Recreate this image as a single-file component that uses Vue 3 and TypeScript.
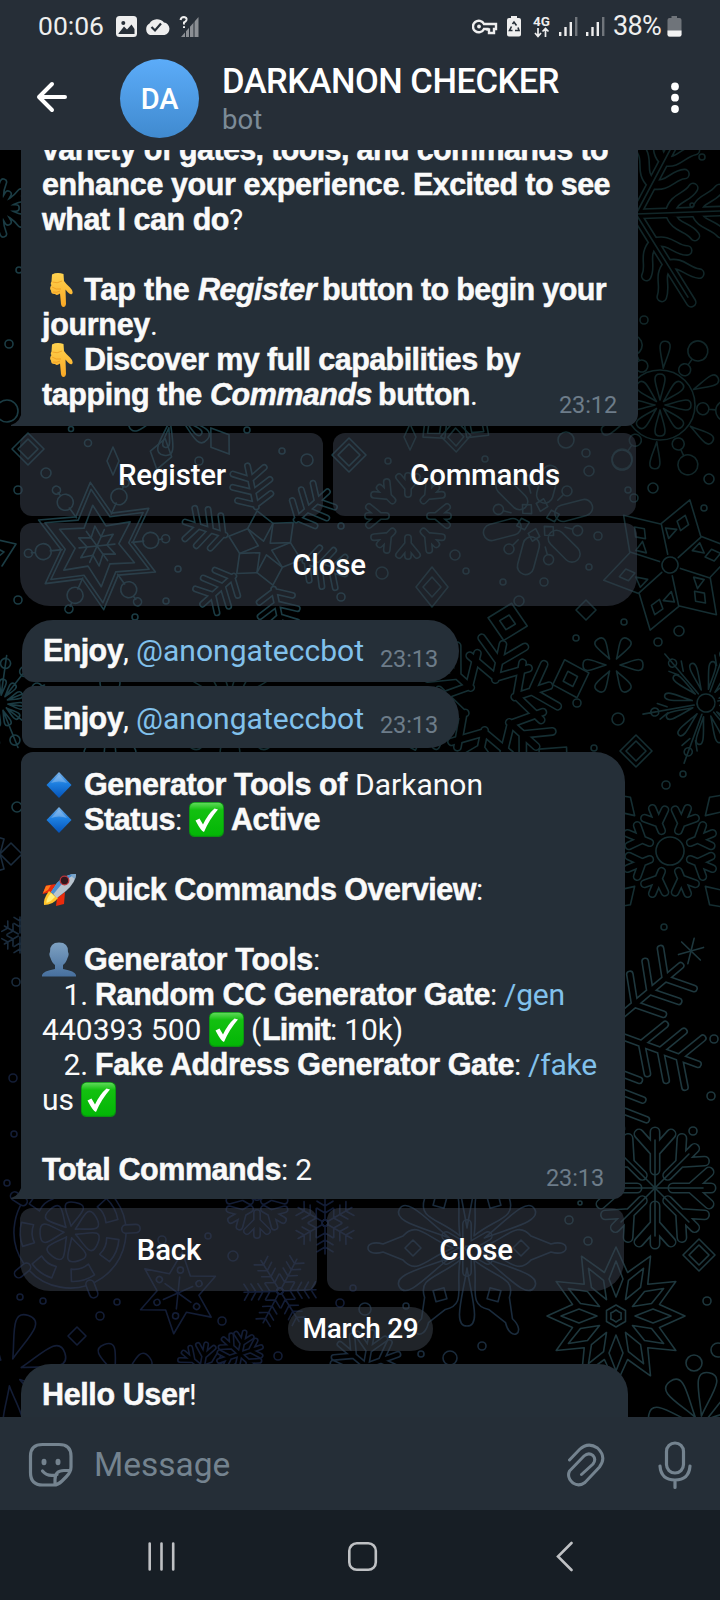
<script setup lang="ts">
import type { Directive } from 'vue'

interface Run { t?: string; k?: 'b' | 'i' | 'l' | 'e'; w?: number; g?: number; e?: string }
interface Motif { x: number; y: number; n: number; r?: number; c: string; tube?: string; tw?: number; line?: string; whole?: string }

// Spreads a run over its column width by adjusting the tracking.
const vFit: Directive<HTMLElement, Run | undefined> = {
  mounted(el, { value }) {
    if (!value) return
    if (value.w) {
      const n = (el.textContent ?? '').length
      const natural = el.getBoundingClientRect().width
      el.style.letterSpacing = `${(value.w - natural) / n}px`
    }
    if (value.g) el.style.marginRight = `${value.g}px`
  },
}

const b = (t: string, w?: number, g?: number): Run => ({ t, k: 'b', w, g })
const i = (t: string, w?: number, g?: number): Run => ({ t, k: 'i', w, g })
const r = (t: string, w?: number): Run => ({ t, w })
const l = (t: string, w?: number): Run => ({ t, k: 'l', w })
const e = (name: string, g = 8): Run => ({ k: 'e', e: name, g })

const intro: Run[][] = [
  [b('variety of gates, tools, and commands to', 566)],
  [b('enhance your experience', 357), r('. ', 14), b('Excited to see', 197)],
  [b('what I can do', 187), r('?')],
  [],
  [e('hand'), b('Tap the ', 114), i('Register', 118, 6), b('button to begin your', 284)],
  [b('journey', 108), r('.')],
  [e('hand'), b('Discover my full capabilities by', 436)],
  [b('tapping the ', 168), i('Commands', 162, 6), b('button', 92), r('.')],
]
const tools: Run[][] = [
  [e('gem'), b('Generator Tools of ', 271), r('Darkanon', 128)],
  [e('gem'), b('Status', 91), r(': ', 14), e('check', 7), b('Active', 89)],
  [],
  [e('rocket'), b('Quick Commands Overview', 392), r(':')],
  [],
  [e('bust'), b('Generator Tools', 229), r(':')],
  [r('   1. ', 53), b('Random CC Generator Gate', 395), r(': ', 14), l('/gen', 61)],
  [r('440393 500 ', 167), e('check', 7), r('(', 11), b('Limit', 68), r(': 10k)', 73)],
  [r('   2. ', 53), b('Fake Address Generator Gate', 419), r(': ', 14), l('/fake', 69)],
  [r('us ', 39), e('check', 7)],
  [],
  [b('Total Commands', 239), r(': 2', 31)],
]
const enjoy: Run[] = [b('Enjoy', 80), r(', ', 13), l('@anongateccbot', 228)]
const hello: Run[] = [b('Hello User', 147), r('!')]

const T1 = '#1b3c44', T2 = '#152e32', T3 = '#112628', N1 = '#131d36', N2 = '#1a2b3c', G1 = '#1e373d'

const petal = (a: number, z: number, w: number) =>
  `M0 ${-a}C${w * .5} ${-(a + z) / 2} ${w * 1.6} ${-z} 0 ${-z}S${-w * .5} ${-(a + z) / 2} 0 ${-a}`
const rhomb = (a: number, z: number, w: number) => `M0 ${-a}L${w} ${-(a + z) / 2}L0 ${-z}L${-w} ${-(a + z) / 2}Z`
const ball = (y: number, q: number) => `M${-q} ${-y}a${q} ${q} 0 1 0 ${2 * q} 0a${q} ${q} 0 1 0 ${-2 * q} 0`
const star = (n: number, R: number, q: number) =>
  'M' + Array.from({ length: n * 2 }, (_, k) => {
    const a = (k * Math.PI) / n, m = k % 2 ? q : R
    return `${(m * Math.sin(a)).toFixed(1)} ${(-m * Math.cos(a)).toFixed(1)}`
  }).join('L') + 'Z'
const fir = (R: number, from: number, step: number, len: number) => {
  let d = `M0 ${-from}V${-R}`
  for (let y = from + step; y < R - 3; y += step) d += `M${-len} ${-(y + len * .6)}L0 ${-y}L${len} ${-(y + len * .6)}`
  return d
}

const motifs: Motif[] = [
  { x: 97, y: 546, n: 6, r: 24, c: T1, whole: '', line: 'M0 -35V-47' + ball(54, 8) + 'M0 -62V-66' + ball(69, 4) + 'M0 0V-18' },
  { x: 97, y: 546, n: 1, r: -6, c: T1, whole: star(6, 64, 36) + star(6, 57, 32) + star(6, 41, 22) + star(6, 20, 10) },
  { x: 265, y: 548, n: 6, r: -12, c: T1, tube: 'M0 -42V-84M-17 -52L0 -44L17 -52M-19 -66L0 -57L19 -66M-16 -79L0 -70L16 -79', tw: 7, line: rhomb(7, 38, 13) },
  { x: 408, y: 516, n: 8, r: 0, c: T2, tube: 'M0 -22V-40M-9 -39L0 -28L9 -39', tw: 8 },
  { x: 538, y: 520, n: 6, r: 15, c: T2, tube: 'M0 -26V-48', tw: 18, line: rhomb(9, 22, 6) },
  { x: 538, y: 520, n: 6, r: 45, c: T2, line: 'M0 -28V-36' + ball(41, 5) },
  { x: 670, y: 565, n: 1, r: 17, c: T2, whole: star(6, 68, 42) + ball(0, 8) },
  { x: 670, y: 565, n: 6, r: 17, c: T2, line: rhomb(36, 52, 6) + 'M-9 -25L-15 -34L-4 -36Z' },
  { x: 670, y: 565, n: 6, r: -12, c: T2, line: 'M0 -11V-42' },
  { x: 613, y: 665, n: 6, r: 30, c: T2, line: petal(7, 30, 6.5) },
  { x: 706, y: 703, n: 12, r: 10, c: T2, line: petal(14, 42, 4) },
  { x: 706, y: 703, n: 6, r: 20, c: T2, line: 'M0 -12V-64M-8 -48l5 9M8 -48l-5 9' + ball(52, 4), whole: ball(0, 9) },
  { x: 660, y: 405, n: 8, r: 0, c: T3, line: petal(5, 31, 6), whole: ball(0, 35) },
  { x: 660, y: 405, n: 6, r: 5, c: T3, line: petal(37, 64, 6) },
  { x: 660, y: 405, n: 6, r: 35, c: T3, line: ball(43, 6) + ball(66, 10) + 'M0 -49V-56' },
  { x: 636, y: 214, n: 6, r: 28, c: T3, tube: 'M0 0V-104M0 -34C-16 -38 -14 -52 -24 -58M0 -34C16 -38 14 -52 24 -58M0 -60C-14 -64 -12 -76 -22 -84M0 -60C14 -64 12 -76 22 -84', tw: 11, line: 'M0 0V-98' },
  { x: 490, y: 705, n: 6, r: 12, c: T2, tube: 'M0 -26V-62M-22 -64L0 -44L22 -64M-30 -44L0 -28L30 -44', tw: 9, line: rhomb(66, 104, 20) + rhomb(77, 92, 8) },
  { x: 670, y: 851, n: 8, r: 22.5, c: T2, tube: 'M0 -22V-46M-11 -40L0 -30L11 -40', tw: 9, whole: ball(0, 14) },
  { x: 670, y: 851, n: 4, r: 45, c: T2, line: 'M0 -50L10 -66L0 -80L-10 -66Z' },
  { x: 604, y: 1030, n: 6, r: 50, c: G1, tube: fir(100, 20, 20, 26), tw: 8 },
  { x: 655, y: 1188, n: 8, r: 0, c: G1, tube: 'M0 -18V-56M-16 -54L0 -36L16 -54', tw: 11, line: 'M0 0V-48' },
  { x: 616, y: 1316, n: 1, r: 0, c: G1, whole: star(12, 69, 45) + star(6, 11, 9.5) + star(6, 6, 5) },
  { x: 616, y: 1316, n: 12, r: 0, c: G1, line: rhomb(19, 55, 7) },
  { x: 467, y: 1248, n: 6, r: 30, c: N2, line: 'M0 -14C-10 -40 -28 -50 -12 -64L-4 -84C-10 -104 10 -104 4 -84L12 -64C28 -50 10 -40 0 -14' + rhomb(46, 62, 8) },
  { x: 467, y: 1248, n: 6, r: 0, c: N2, tube: 'M0 -6V-24', tw: 10, line: petal(20, 78, 9) },
  { x: 70, y: 1232, n: 7, r: 10, c: N1, line: petal(6, 30, 11) + 'M-9 -36L-12 -48Q0 -52 12 -48L9 -36Q0 -40 -9 -36', whole: ball(0, 56) },
  { x: 70, y: 1232, n: 5, r: 15, c: N1, tube: 'M0 -56V-66', tw: 10 },
  { x: 178, y: 1293, n: 1, r: 6, c: N1, whole: star(6, 41, 21) },
  { x: 178, y: 1293, n: 6, r: 6, c: N1, line: 'M0 0V-16' + ball(23, 3) },
  { x: 280, y: 1291, n: 6, r: 28, c: N1, line: fir(36, 3, 7, 8) + ball(0, 3) },
  { x: 325, y: 1223, n: 6, r: 0, c: N1, line: fir(31, 3, 7, 8) + ball(0, 3) },
  { x: 8, y: 1372, n: 7, r: 20, c: N1, line: petal(14, 60, 12) },
  { x: 118, y: 1382, n: 5, r: -20, c: N1, line: petal(8, 40, 10) },
  { x: 202, y: 1368, n: 6, r: 10, c: N1, tube: 'M0 0V-24M-8 -22L0 -12L8 -22', tw: 6 },
  { x: 240, y: 1354, n: 6, r: 12, c: N1, tube: 'M0 0V-22M-8 -19L0 -11L8 -19', tw: 6 },
  { x: 257, y: 1205, n: 6, r: 0, c: N1, tube: 'M0 -8V-30M-10 -26L0 -16L10 -26', tw: 8 },
  { x: 366, y: 1366, n: 6, r: 10, c: N2, tube: 'M0 0V-34M-14 -30L0 -16L14 -30', tw: 7 },
  { x: 700, y: 1424, n: 8, r: 10, c: G1, line: petal(8, 52, 11) },
  { x: 0, y: 703, n: 12, r: 8, c: T1, line: petal(8, 24, 4) + 'M0 -8V-48' + ball(40, 5) },
  { x: 0, y: 208, n: 6, r: 90, c: T1, tube: 'M0 0V-16M-10 -24Q-8 -10 0 -4Q8 -10 10 -24', tw: 8 },
  { x: 172, y: 410, n: 6, r: 10, c: T1, line: petal(10, 46, 9) + petal(18, 38, 4) },
  { x: 455, y: 410, n: 7, r: 24, c: T2, line: rhomb(10, 42, 15) + rhomb(18, 36, 8) },
  { x: 0, y: 854, n: 3, r: 90, c: N2, line: rhomb(0, 22, 11) },
  { x: 20, y: 935, n: 6, r: 0, c: N2, line: fir(18, 2, 6, 6) },
  { x: 230, y: 705, n: 8, r: 0, c: T2, line: petal(10, 58, 12) },
  { x: 110, y: 720, n: 7, r: 0, c: T1, line: petal(10, 44, 12) },
  { x: 691, y: 951, n: 6, r: 14, c: G1, line: 'M0 0V-13' },
  { x: 0, y: 552, n: 1, r: 0, c: T1, whole: 'M-10 -14L16 -8L2 14M-4 -4L4 0L-2 5' },
  { x: 28, y: 449, n: 1, c: T1, whole: rhomb(-16, 16, 16) + rhomb(-10, 10, 10) },
  { x: 432, y: 587, n: 1, c: T2, whole: rhomb(-20, 20, 16) + rhomb(-10, 10, 9) },
  { x: 699, y: 1255, n: 1, c: G1, whole: rhomb(-16, 16, 16) + rhomb(-10, 10, 10) },
  { x: 636, y: 751, n: 1, c: T2, whole: rhomb(-16, 16, 16) + rhomb(-10, 10, 10) },
  { x: 161, y: 454, n: 1, r: 15, c: T1, whole: rhomb(-16, 16, 11) },
  { x: 220, y: 441, n: 1, r: -35, c: T1, whole: rhomb(-16, 16, 11) },
  { x: 113, y: 461, n: 1, c: T1, whole: rhomb(-14, 14, 6) },
  { x: 349, y: 455, n: 1, c: T1, whole: rhomb(-17, 17, 17) + rhomb(-11, 11, 11) },
  { x: 586, y: 610, n: 1, c: T2, whole: rhomb(-10, 10, 10) },
  { x: 77, y: 1336, n: 1, c: N1, whole: rhomb(-9, 9, 9) },
  { x: 410, y: 437, n: 1, c: T2, whole: rhomb(-13, 13, 6) },
]

const dots: [number, number, number, string][] = [
  [71, 429, 2.5, T1], [88, 443, 3.5, T1], [46, 473, 5, T1], [18, 490, 4, T1], [18, 600, 4, T1], [135, 617, 3, T1], [19, 270, 3, T1], [9, 344, 4, T1], [7, 411, 11, T1],
  [247, 430, 3, T1], [282, 451, 3, T1], [307, 460, 6, T1], [199, 461, 4, T1], [178, 569, 3, T1], [166, 601, 3, T1], [341, 526, 3, T1], [341, 597, 4, T1], [388, 461, 3, T2],
  [485, 459, 3, T2], [566, 440, 8, T2], [586, 453, 4, T2], [589, 471, 5, T2], [622, 460, 10, T2], [628, 490, 3, T2], [634, 498, 4, T2], [598, 536, 4, T2], [589, 567, 3, T2],
  [544, 582, 4, T2], [503, 582, 3, T2], [466, 571, 3, T2], [455, 555, 5, T2], [382, 573, 6, T2], [519, 601, 5, T2], [624, 622, 3, T2], [576, 638, 3, T2], [577, 703, 4, T2],
  [618, 719, 6, T2], [653, 488, 5, T2], [709, 479, 5, T2], [704, 508, 3, T2], [679, 631, 5, T2], [658, 642, 4, T2], [594, 748, 3, T2], [683, 774, 3, T2], [666, 785, 4, T2],
  [664, 927, 3, T2], [714, 1039, 4, G1], [711, 1096, 4, G1], [693, 1131, 4, G1], [644, 320, 4, T3], [702, 157, 3, T3], [17, 807, 5, T1], [16, 982, 4, N2], [13, 1078, 4, N1],
  [14, 1134, 3, N1], [7, 1183, 3, N1], [20, 1297, 3, N1], [43, 1301, 3, N1], [117, 1302, 3, N1], [100, 1316, 4, N1], [222, 1321, 4, N1], [278, 1356, 4, N1], [233, 1256, 5, N1],
  [208, 1236, 3, N1], [162, 1240, 4, N1], [340, 1303, 4, N1], [353, 1288, 3, N1], [365, 1309, 6, N2], [406, 1306, 3, N2], [482, 1346, 4, N2], [421, 1354, 3, N2], [569, 1220, 4, G1],
  [588, 1241, 4, G1], [580, 1203, 2, G1], [707, 1301, 4, G1], [694, 1363, 8, G1], [718, 1350, 7, G1], [450, 1358, 7, N2], [692, 205, 2, T3],
]
const turns = (m: Motif) => Array.from({ length: m.n }, (_, k) => (m.r ?? 0) + (k * 360) / m.n)
</script>

<template>
  <div class="phone">
    <svg width="0" height="0" class="defs">
      <defs>
        <linearGradient id="gy" x1="0" y1="0" x2="0" y2="1"><stop offset="0" stop-color="#ffd34f" /><stop offset="1" stop-color="#f9a825" /></linearGradient>
        <linearGradient id="gb" x1="0" y1="0" x2="0" y2="1"><stop offset="0" stop-color="#7fb4e6" /><stop offset=".45" stop-color="#1d7fe0" /><stop offset="1" stop-color="#0553b8" /></linearGradient>
        <linearGradient id="gg" x1="0" y1="0" x2="0" y2="1"><stop offset="0" stop-color="#5fd95a" /><stop offset=".22" stop-color="#13c010" /><stop offset="1" stop-color="#03b606" /></linearGradient>
        <linearGradient id="gp" x1="0" y1="0" x2="0" y2="1"><stop offset="0" stop-color="#7ea1c2" /><stop offset="1" stop-color="#47709e" /></linearGradient>
        <symbol id="hand" viewBox="0 0 34 35"><path fill="url(#gy)" d="M10 2.5Q15-.2 21.500 2L22 9Q24 12 28 15.500Q32 19.500 30 22Q28 23.500 23.500 17.500L24 32Q23.500 35 21.500 35Q19.500 35 19 32L18 21.500Q15 24 13 22Q9 22.500 9 18.500Q7 16 9.500 13Q8 12 9.500 9.500Z" /><path d="M10 15Q14 18 19 17M11 20Q15 21 18 19M10.500 10Q15 12 20 9" fill="none" stroke="#e88b14" stroke-width=".8" opacity=".7" /></symbol>
        <symbol id="gem" viewBox="0 0 34 35"><path fill="url(#gb)" d="M17 5L29.500 18L17 31L4.500 18Z" /><path fill="#b9d8f5" opacity=".35" d="M17 7.500L25 16Q17 13 9 16Z" /></symbol>
        <symbol id="check" viewBox="0 0 35 35"><rect width="35" height="35" rx="5.500" fill="#0a8f12" /><rect x=".8" y=".8" width="33.400" height="33" rx="5" fill="url(#gg)" /><path d="M6.500 18.500L10.500 16.500L14 22.500Q19 12 25.500 6.500L29 7.500Q20.500 17 15 30Q12.500 30 6.500 18.500Z" fill="#fff" /></symbol>
        <symbol id="rocket" viewBox="0 0 34 35"><path fill="#ea2b0c" d="M14 12L4 13.500L.500 22L9 20ZM23 20L22 32L14 34L15 26Z" /><path fill="#ff7a1a" d="M4 14L9 13L6 18L1 21Z" /><path fill="#ffc42b" d="M7 19Q1 27 2 33Q11 33 16 26Z" /><path fill="#ffef7a" d="M9 21Q4 27 4.500 31Q10 29 13 25Z" /><path fill="#b8c4cf" d="M34 2Q34 10 24 19L15 26L9 20L15 11Q23 2 34 2Z" /><path fill="#4b8fd0" d="M34 2Q23 2 15 11L9 20L11.500 22L19 13Q25 6 34 2Z" /><path fill="#7aa6cc" d="M34 2L33 7Q30 6 29 2.500Z" /><circle cx="22.500" cy="8.500" r="4.300" fill="#32161d" stroke="#b8333a" stroke-width="1.300" /></symbol>
        <symbol id="bust" viewBox="0 0 34 35"><path fill="url(#gp)" d="M17 .500Q26.500 .500 26 10Q27.500 12 25.500 16Q24 21 21 23V27Q33 29 34 33V34.500H0V33Q1 29 13 27V23Q10 21 8.500 16Q6.500 12 8 10Q7.500 .500 17 .500Z" /></symbol>
      </defs>
    </svg>

    <header class="top">
      <div class="status">
        <span class="clock">00:06</span>
        <svg class="st-left" width="84" height="22" viewBox="0 0 84 22">
          <rect x="0" y="0" width="21" height="21" rx="3.500" fill="#eee" /><circle cx="7.300" cy="7" r="2" fill="#262e37" /><path d="M2.500 17.500L8 10.500L11 13.500L15.500 8.500L18.500 13V18H2.500Z" fill="#262e37" />
          <path d="M34 19A6 6.300 0 0 1 33.500 7.500A8.500 8 0 0 1 48 6.500A5.900 6.300 0 0 1 48.500 19Z" fill="#eee" /><path d="M35.500 11L39 14.500L45 7.500" fill="none" stroke="#262e37" stroke-width="2.200" />
          <path d="M65 21L82.500 1V21Z" fill="#8b8f94" /><path d="M69.500 12V21M73.500 9V21M78 4V21" stroke="#262e37" stroke-width="1" /><path d="M64.500 4Q65 1 68 1Q71 1.500 70.500 4Q70 5.500 68 6.500V8.500M68 10.300V12" fill="none" stroke="#eee" stroke-width="2" />
        </svg>
        <svg class="st-right" width="136" height="23" viewBox="0 0 136 23">
          <g fill="none" stroke="#eee" stroke-width="2.400"><path d="M12 8A5.800 5.800 0 1 0 12 13H15.500V13.500H17V17H22V13H24V8Z" /></g><circle cx="7" cy="10.500" r="1.900" fill="#eee" />
          <path d="M39 0H45V2H47Q49 2 49 4V18.500Q49 20.500 47 20.500H37Q35 20.500 35 18.500V4Q35 2 37 2H39Z" fill="#eee" /><path d="M40.500 8L42 6L44.500 9.500M46 11.500L47 14.500H43M40.500 14.500H37.500L39.500 10.500" fill="none" stroke="#262e37" stroke-width="1.600" />
          <path d="M66 12V20M63 17L66 20.500L69 17M73.500 21V13M70.500 15.500L73.500 12.500L76.500 15.500" fill="none" stroke="#eee" stroke-width="1.700" />
          <g v-for="o in [0, 27]" :key="o" fill="#eee"><rect :x="87 + o" y="16" width="2.400" height="4" /><rect :x="92.300 + o" y="11" width="2.400" height="9" /><rect :x="97.600 + o" y="6" width="2.400" height="14" /><rect :x="103 + o" y="1" width="2.400" height="19" fill="#70757b" /></g>
        </svg>
        <span class="lte">4G</span>
        <span class="pct">38%</span>
        <svg class="batt" width="15" height="22" viewBox="0 0 15 22"><path d="M4.500 0H10V2H12.500Q14.500 2 14.500 4V19Q14.500 21 12.500 21H2.500Q.500 21 .500 19V4Q.500 2 2.500 2H4.500Z" fill="#6f747a" /><path d="M.500 14.500H14.500V18.500Q14.500 20.500 12.500 20.500H2.500Q.500 20.500 .500 18.500Z" fill="#f2f2f2" /></svg>
      </div>
      <div class="bar">
        <svg class="back" width="32" height="32" viewBox="0 0 32 32" fill="none" stroke="#fff" stroke-width="4" stroke-linecap="round" stroke-linejoin="round"><path d="M29 16H3M16 3L3 16L16 29" /></svg>
        <div class="avatar">DA</div>
        <div class="who"><div class="title"><span v-fit="{ w: 337 }">DARKANON CHECKER</span></div><div class="sub">bot</div></div>
        <svg class="more" width="10" height="32" viewBox="0 0 10 32" fill="#fff"><circle v-for="y in [4.500, 15.700, 27]" :key="y" cx="5" :cy="y" r="3.900" /></svg>
      </div>
    </header>

    <main class="chat">
      <svg class="paper" width="720" height="1267" viewBox="0 150 720 1267" fill="none" stroke-width="1.600" stroke-linecap="round" stroke-linejoin="round">
        <g v-for="(m, k) in motifs" :key="k" :transform="`translate(${m.x} ${m.y})`" :stroke="m.c">
          <template v-if="m.tube">
            <path v-for="a in turns(m)" :key="'a' + a" :d="m.tube" :transform="`rotate(${a})`" :stroke-width="m.tw" />
            <path v-for="a in turns(m)" :key="'b' + a" :d="m.tube" :transform="`rotate(${a})`" :stroke-width="(m.tw ?? 6) - 3.2" stroke="#000" />
          </template>
          <template v-if="m.line"><path v-for="a in turns(m)" :key="'c' + a" :d="m.line" :transform="`rotate(${a})`" /></template>
          <path v-if="m.whole" :d="m.whole" :transform="`rotate(${m.r ?? 0})`" />
        </g>
        <circle v-for="(d, k) in dots" :key="'d' + k" :cx="d[0]" :cy="d[1]" :r="d[2]" :stroke="d[3]" />
      </svg>

      <div class="flow">
        <section class="bubble intro">
          <div v-for="(line, n) in intro" :key="n" class="line">
            <template v-for="(run, k) in line" :key="k">
              <svg v-if="run.k === 'e'" v-fit="run" class="emoji" :class="run.e"><use :href="'#' + run.e" /></svg>
              <span v-else v-fit="run" :class="run.k">{{ run.t }}</span>
            </template>
          </div>
          <time>23:12</time>
          <svg class="tail" width="11" height="16" viewBox="0 0 11 16"><path d="M11 0Q10 12 0 15V16H11Z" fill="#252f38" /></svg>
        </section>
        <div class="keys k1"><button>Register</button><button>Commands</button></div>
        <div class="keys k2"><button>Close</button></div>

        <section v-for="q in 2" :key="q" class="bubble short" :class="'s' + q">
          <div class="line"><span v-for="(run, k) in enjoy" :key="k" v-fit="run" :class="run.k">{{ run.t }}</span></div>
          <time>23:13</time>
        </section>

        <section class="bubble tools">
          <div v-for="(line, n) in tools" :key="n" class="line">
            <template v-for="(run, k) in line" :key="k">
              <svg v-if="run.k === 'e'" v-fit="run" class="emoji" :class="run.e"><use :href="'#' + run.e" /></svg>
              <span v-else v-fit="run" :class="run.k">{{ run.t }}</span>
            </template>
          </div>
          <time>23:13</time>
          <svg class="tail" width="11" height="16" viewBox="0 0 11 16"><path d="M11 0Q10 12 0 15V16H11Z" fill="#252f38" /></svg>
        </section>
        <div class="keys k3"><button>Back</button><button>Close</button></div>
        <div class="date">March 29</div>
        <section class="bubble hello">
          <div class="line"><span v-for="(run, k) in hello" :key="k" v-fit="run" :class="run.k">{{ run.t }}</span></div>
        </section>
      </div>
    </main>

    <footer class="composer">
      <svg class="smile" width="46" height="46" viewBox="0 0 46 46" fill="none" stroke="#74838f" stroke-width="3.200" stroke-linecap="round" stroke-linejoin="round"><path d="M26 43H14.500Q2.500 43 2.500 30.500V14Q2.500 2.500 14.500 2.500H31Q43 2.500 43 14V25Q43 30 38.500 34.500L34 39Q30 43 26 43ZM27 43V37.500Q27 28.500 36 28.500H42.500M14.500 29Q20 35.500 29 32.500" /><ellipse cx="16" cy="20" rx="1.500" ry="2.200" fill="#74838f" stroke-width="2" /><ellipse cx="30" cy="20" rx="1.500" ry="2.200" fill="#74838f" stroke-width="2" /></svg>
      <span class="hint">Message</span>
      <svg class="clip" width="40" height="46" viewBox="0 0 40 46" fill="none" stroke="#74838f" stroke-width="3" stroke-linecap="round"><path d="M4.500 18L14.500 7.500Q23 -.500 32.500 6Q42 15 34.500 25L20 40.500Q14 45 8 41Q1.500 35.500 4.500 29L19 14Q23.500 10 28 13.500Q31.500 17.500 28 22L16.500 32.500" /></svg>
      <svg class="mic" width="36" height="50" viewBox="0 0 36 50" fill="none" stroke="#74838f" stroke-width="3.200" stroke-linecap="round"><rect x="9.500" y="3" width="17" height="30" rx="8.500" /><path d="M3 26Q4 40 18 40Q32 40 33 26M18 40V47.500" /></svg>
    </footer>
    <nav class="nav">
      <svg width="720" height="90" viewBox="0 0 720 90" fill="none" stroke="#bfc1c4" stroke-width="2.600" stroke-linecap="round" stroke-linejoin="miter"><path d="M149.700 33.500V59.500M161.500 33.500V59.500M173.200 33.500V59.500M571.500 33L558 46.500L571.500 60" /><rect x="349.300" y="33.300" width="26.500" height="26.500" rx="7.500" /></svg>
    </nav>
  </div>
</template>

<style>
body { background: #000; }
</style>

<style scoped>
.phone { width: 720px; height: 1600px; display: flex; flex-direction: column; overflow: hidden; background: #000; font-family: Roboto, "Liberation Sans", sans-serif; color: #fafafa; }
.defs { position: absolute; }
.top { height: 150px; flex: none; background: #262e37; }
.status { height: 52px; display: flex; align-items: flex-start; color: #eee; font-size: 26px; line-height: 30px; position: relative; }
.clock { margin: 11px 0 0 38px; width: 78px; font-size: 26.500px; }
.st-left { margin-top: 16px; }
.st-right { margin: 16px 0 0 272px; }
.lte { position: absolute; left: 533px; top: 13px; font-size: 13.500px; line-height: 16px; font-weight: 700; }
.pct { margin: 11px 0 0 5px; width: 54px; font-size: 27px; letter-spacing: -.7px; }
.batt { margin-top: 16px; }
.bar { height: 98px; display: flex; align-items: flex-start; }
.back { margin: 29px 0 0 36px; }
.avatar { width: 79px; height: 79px; margin: 7px 0 0 52px; border-radius: 50%; background: linear-gradient(#5cacf9, #408acf); font-size: 29px; font-weight: 500; line-height: 80px; text-align: center; color: #fff; letter-spacing: -.3px; }
.who { margin-left: 23px; width: 448px; }
.title { margin-top: 9px; height: 40px; font-size: 34.500px; line-height: 40px; font-weight: 500; white-space: pre; color: #fff; }
.sub { margin-top: 2px; font-size: 27.500px; line-height: 34px; color: #7c8b97; }
.more { margin: 30px 0 0 0; }

.chat { height: 1267px; flex: none; overflow: hidden; position: relative; }
.paper { position: absolute; left: 0; top: 0; }
.flow { position: relative; display: flex; flex-direction: column; }
.bubble { position: relative; background: #252f38; padding: 0 21px; margin-left: 21px; box-sizing: border-box; }
.line { height: 35px; font-size: 30px; line-height: 35px; white-space: pre; display: flex; align-items: flex-start; }
.line span { flex: none; }
.b, .i { font-family: "Liberation Sans", sans-serif; font-weight: 700; font-size: 30.500px; -webkit-text-stroke: .5px #fafafa; }
.i { font-style: italic; }
.l { color: #81c1ec; }
.emoji { width: 34px; height: 35px; flex: none; }
.emoji.check { width: 35px; }
time { position: absolute; font-size: 23.500px; line-height: 27px; color: #6d7c89; letter-spacing: -.1px; }
.tail { position: absolute; left: -10px; bottom: 0; }

.intro { width: 617px; height: 294px; margin-top: -18px; border-bottom-right-radius: 12px; }
.intro time { right: 21px; bottom: 7px; }
.keys { display: flex; gap: 10px; margin-left: 20px; }
button { flex: 1; height: 83px; border: 0; padding: 0 0 0 1px; border-radius: 12px; background: rgba(58, 66, 78, .52); color: #fff; font: 500 29.400px/34px Roboto, sans-serif; letter-spacing: -.15px; }
.k1 { width: 616px; margin-top: 7px; }
.k2 { width: 617px; margin-top: 7px; }
.k2 button { border-radius: 12px 12px 30px 30px; }
.short { width: 437px; height: 62px; margin-left: 22px; padding-top: 13px; border-radius: 31px 31px 31px 12px; }
.s1 { margin-top: 14px; }
.s2 { margin-top: 4px; border-radius: 12px 31px 31px 12px; padding-top: 15px; }
.short time { right: 21px; bottom: 9px; }
.tools { width: 604px; height: 447px; margin-top: 4px; padding-top: 15px; border-radius: 12px 30px 12px 0; }
.tools time { right: 21px; bottom: 7px; }
.k3 { width: 604px; margin-top: 9px; }
.k3 button:first-child { border-bottom-left-radius: 30px; }
.k3 button:last-child { border-bottom-right-radius: 30px; }
.date { align-self: flex-start; margin: 16px 0 0 288px; width: 145px; height: 44px; box-sizing: border-box; border-radius: 22px; background: rgba(58, 66, 74, .55); text-align: center; font-size: 28px; line-height: 43px; font-weight: 500; color: #fff; letter-spacing: -.3px; }
.hello { width: 607px; height: 60px; margin-top: 13px; padding-top: 13px; border-radius: 30px 30px 0 0; }

.composer { height: 93px; flex: none; display: flex; align-items: flex-start; background: #252e37; }
.smile { margin: 25px 0 0 28px; }
.hint { margin: 28px 0 0 20px; width: 471px; font-size: 33.500px; line-height: 40px; color: #74838f; }
.clip { margin-top: 25px; }
.mic { margin: 23px 0 0 52px; }
.nav { height: 90px; flex: none; background: #171e25; }
.nav svg { display: block; }
</style>
